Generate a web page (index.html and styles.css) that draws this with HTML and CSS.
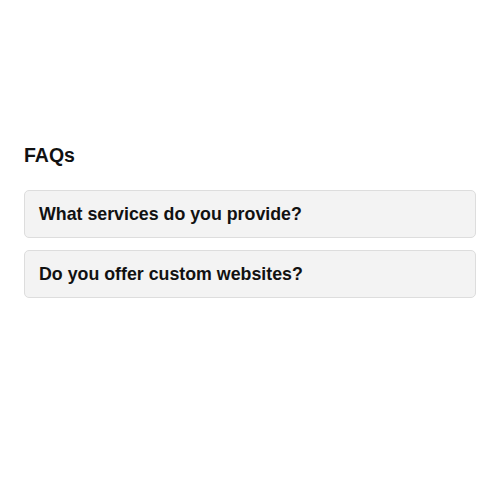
FILE: index.html
```html
<!DOCTYPE html>
<html>
<head>
<meta charset="utf-8">
<link rel="stylesheet" href="styles.css">
</head>
<body>
<section class="faq">
  <h2 class="faq-title">FAQs</h2>
  <div class="faq-list">
    <div class="faq-item">What services do you provide?</div>
    <div class="faq-item">Do you offer custom websites?</div>
  </div>
</section>
</body>
</html>
```
FILE: styles.css
```css
html, body {
  margin: 0;
  background: #ffffff;
}
body {
  font-family: "Liberation Sans", Arial, sans-serif;
  color: #111111;
}
.faq {
  padding: 144px 24px 0 24px;
}
.faq-title {
  margin: 0 0 24px 0;
  font-size: 19.5px;
  font-weight: 700;
  line-height: 22px;
}
.faq-list {
  display: flex;
  flex-direction: column;
  gap: 12px;
}
.faq-item {
  background: #f3f3f3;
  border: 1px solid #dddddd;
  border-radius: 5px;
  padding: 13px 14px;
  font-size: 17.8px;
  font-weight: 700;
  line-height: 20px;
}
```
